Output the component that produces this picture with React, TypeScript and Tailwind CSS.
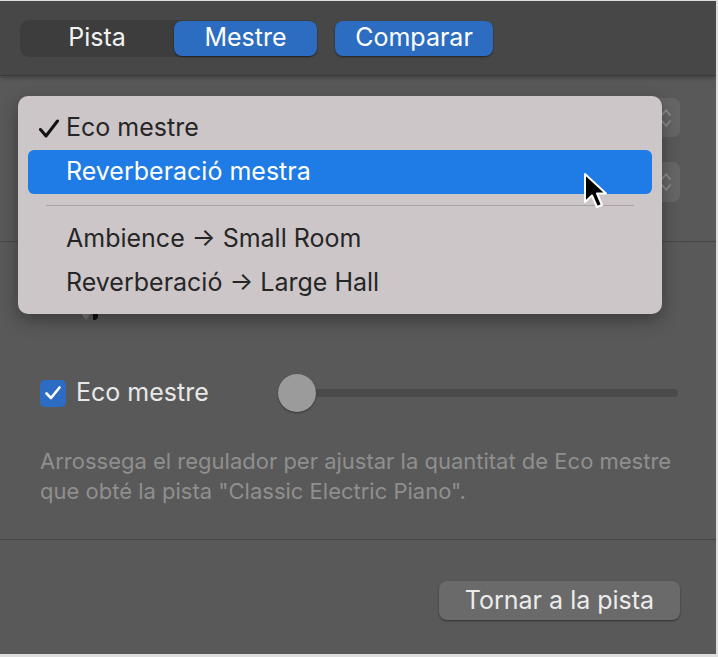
import React from 'react';

const MENU_ITEMS = [
  { label: 'Eco mestre', checked: true },
  { label: 'Reverberació mestra', active: true },
  { separator: true },
  { label: 'Ambience → Small Room' },
  { label: 'Reverberació → Large Hall' },
];

function Chevrons() {
  return (
    <svg width="12" height="22" viewBox="0 0 12 22" fill="none" stroke="#8a8a8a" strokeWidth="2" strokeLinecap="round" strokeLinejoin="round">
      <path d="M2 8 L6 3 L10 8" />
      <path d="M2 14 L6 19 L10 14" />
    </svg>
  );
}

function Cursor() {
  return (
    <svg width="26" height="38" viewBox="0 0 26 38" className="absolute left-[583px] top-[171px]">
      <path d="M2 2 L2 30 L9 23.5 L14 35 L19 33 L14 21.5 L23 21.5 Z" fill="#000" stroke="#fff" strokeWidth="2" strokeLinejoin="round" />
    </svg>
  );
}

function PopupMenu() {
  return (
    <div className="absolute left-[18px] top-[95px] w-[644px] rounded-[10px] bg-[#cdc6c9] pt-[10px] pb-[9px] px-[10px] shadow-[0_6px_18px_rgba(0,0,0,0.35)]">
      {MENU_ITEMS.map((item, idx) => {
        if (item.separator) {
          return (
            <div key={idx} className="h-[23px] flex items-center px-[18px]">
              <div className="h-px w-full bg-[#a8a2a6]" />
            </div>
          );
        }
        return (
          <div
            key={idx}
            className={`relative h-[44px] flex items-center pl-[38px] rounded-[6px] text-[25px] ${
              item.active ? 'bg-[#1f7be5] text-white' : 'text-[#262626]'
            }`}
          >
            {item.checked && (
              <svg width="22" height="20" viewBox="0 0 22 20" className="absolute left-[10px] top-[13px]" fill="none" stroke="#111" strokeWidth="3" strokeLinecap="round" strokeLinejoin="round">
                <path d="M2.5 10.5 L8 17 L19.5 2" />
              </svg>
            )}
            {item.label}
          </div>
        );
      })}
    </div>
  );
}

export default function App() {
  return (
    <div className="w-[718px] h-[657px] bg-[#dedede] pt-px font-['Inter','Noto_Sans',sans-serif]">
      <div className="relative w-[716px] h-[653px] bg-[#595959] flex flex-col overflow-hidden">
        {/* Top tab bar */}
        <div className="h-[75px] shrink-0 bg-[#474747] border-b border-[#3a3a3a] shadow-[0_2px_4px_rgba(0,0,0,0.25)] flex items-center pl-[20px] gap-[18px]">
          <div className="flex items-center h-[37px] rounded-[9px] bg-[#3d3d3d]">
            <div className="w-[154px] text-center text-[25px] text-[#f2f2f2]">Pista</div>
            <div className="w-[143px] h-[35px] flex items-center justify-center rounded-[8px] bg-[#2c6dc1] text-[25px] text-white shadow-[0_1px_2px_rgba(0,0,0,0.5)]">
              Mestre
            </div>
          </div>
          <div className="w-[158px] h-[35px] flex items-center justify-center rounded-[8px] bg-[#2c6dc1] text-[25px] text-white shadow-[0_1px_2px_rgba(0,0,0,0.5)]">
            Comparar
          </div>
        </div>

        {/* Send selectors (under the open menu) */}
        <div className="h-[166px] shrink-0 border-b border-[#474747] flex flex-col items-end pr-[36px] pt-[22px] gap-[25px]">
          <div className="w-[260px] h-[39px] rounded-[7px] bg-[#666666] flex items-center justify-end pr-[8px]">
            <Chevrons />
          </div>
          <div className="w-[260px] h-[40px] rounded-[7px] bg-[#666666] flex items-center justify-end pr-[8px]">
            <Chevrons />
          </div>
        </div>

        {/* Send amount */}
        <div className="h-[298px] shrink-0 border-b border-[#464646] pl-[40px] pr-[38px]">
          <div className="mt-[66px] ml-[40px] h-[12px] w-[18px] flex items-end gap-px">
            <div className="w-0 h-0 border-l-[6px] border-l-transparent border-r-[6px] border-r-transparent border-t-[8px] border-t-[#7a7a7a]" />
            <div className="w-[6px] h-[10px] bg-[#111] rounded-br-[4px]" />
          </div>
          <div className="mt-[53px] h-[40px] flex items-center">
            <div className="w-[26px] h-[27px] rounded-[5px] bg-[#2c6cc4] flex items-center justify-center">
              <svg width="18" height="16" viewBox="0 0 18 16" fill="none" stroke="#fff" strokeWidth="2.6" strokeLinecap="round" strokeLinejoin="round">
                <path d="M2.5 8.5 L7 13 L15.5 2.5" />
              </svg>
            </div>
            <span className="ml-[10px] w-[202px] text-[25px] text-[#e8e8e8]">Eco mestre</span>
            <div className="relative flex-1 h-[40px] flex items-center">
              <div className="ml-[19px] flex-1 h-[8px] rounded-full bg-[#4a4a4a]" />
              <div className="absolute left-0 top-px w-[38px] h-[38px] rounded-full bg-[#9b9b9b] shadow-[0_1px_2px_rgba(0,0,0,0.4)]" />
            </div>
          </div>
          <p className="mt-[33px] text-[22px] leading-[30px] text-[#8f8f8f]">
            Arrossega el regulador per ajustar la quantitat de Eco mestre que obté la pista "Classic Electric Piano".
          </p>
        </div>

        {/* Footer */}
        <div className="flex-1 flex justify-end items-start pr-[36px] pt-[41px]">
          <button className="w-[241px] h-[39px] rounded-[8px] bg-[#6a6a6a] text-[25px] text-[#ececec] shadow-[0_1px_2px_rgba(0,0,0,0.45)]">
            Tornar a la pista
          </button>
        </div>

        <PopupMenu />
        <Cursor />
      </div>
    </div>
  );
}
